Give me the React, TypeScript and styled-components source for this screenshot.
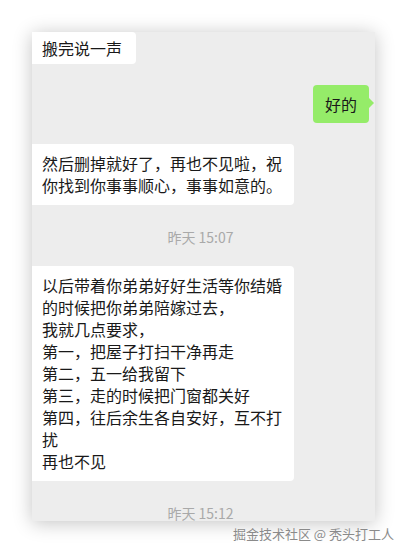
import React from "react";
import styled, { createGlobalStyle } from "styled-components";

const Global = createGlobalStyle`
  html, body { margin: 0; padding: 0; background: #ffffff; }
  body { font-family: "Noto Sans CJK SC", "Noto Sans", "Liberation Sans", sans-serif; }
`;

const Page = styled.div`
  width: 407px;
  height: 553px;
  box-sizing: border-box;
  padding: 32px 0 0 32px;
  display: flex;
  flex-direction: column;
  overflow: hidden;
`;

const Panel = styled.div`
  width: 343px;
  height: 489px;
  background: #ededed;
  box-shadow: 0 2px 18px rgba(0, 0, 0, 0.24);
  overflow: hidden;
  display: flex;
  flex-direction: column;
  padding-right: 6px;
  box-sizing: border-box;
`;

const Bubble = styled.div<{ $mine?: boolean; $top?: number }>`
  position: relative;
  align-self: ${(p) => (p.$mine ? "flex-end" : "flex-start")};
  background: ${(p) => (p.$mine ? "#95ec69" : "#ffffff")};
  color: #191919;
  font-size: 16px;
  line-height: 22px;
  padding: ${(p) => (p.$mine ? "8px 12px" : "8px 10px 9px 10px")};
  max-width: 242px;
  border-radius: ${(p) => (p.$mine ? "4px" : "0 4px 4px 0")};
  margin-top: ${(p) => p.$top ?? 0}px;
  white-space: pre-wrap;
  word-break: break-all;

  ${(p) =>
    p.$mine &&
    `
    &::after {
      content: "";
      position: absolute;
      right: -5px;
      top: 13px;
      border-top: 5px solid transparent;
      border-bottom: 5px solid transparent;
      border-left: 5px solid #95ec69;
    }
  `}
`;

const FirstBubble = styled(Bubble)`
  padding: 5px 14px 5px 10px;
`;

const Time = styled.div<{ $bottom?: number }>`
  align-self: center;
  margin: 22px 0 ${(p) => p.$bottom ?? 19}px 0;
  font-size: 14px;
  line-height: 20px;
  color: #a9a9a9;
`;

const Watermark = styled.div`
  align-self: flex-end;
  margin: 5px 13px 0 0;
  font-size: 13px;
  line-height: 16px;
  color: #8a8a8a;
  text-shadow: 0 0 1px #fff;
`;

export default function App() {
  return (
    <>
      <Global />
      <Page>
        <Panel>
          <FirstBubble>搬完说一声</FirstBubble>
          <Bubble $mine $top={21}>
            好的
          </Bubble>
          <Bubble $top={21}>然后删掉就好了，再也不见啦，祝你找到你事事顺心，事事如意的。</Bubble>
          <Time>昨天 15:07</Time>
          <Bubble>
            {"以后带着你弟弟好好生活等你结婚的时候把你弟弟陪嫁过去，\n我就几点要求，\n第一，把屋子打扫干净再走\n第二，五一给我留下\n第三，走的时候把门窗都关好\n第四，往后余生各自安好，互不打扰\n再也不见"}
          </Bubble>
          <Time $bottom={0}>昨天 15:12</Time>
        </Panel>
        <Watermark>掘金技术社区 @ 秃头打工人</Watermark>
      </Page>
    </>
  );
}
